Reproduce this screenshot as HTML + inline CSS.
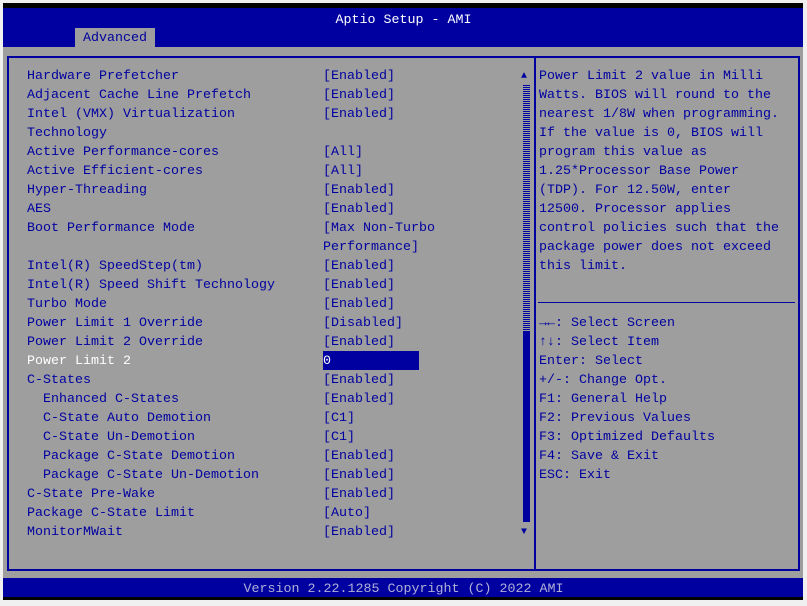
<!DOCTYPE html><html><head><style>
*{margin:0;padding:0}
body{width:807px;height:606px;background:#f0f0f0;position:relative;overflow:hidden;font-family:"Liberation Mono",monospace;font-size:13.33px;color:#0000a0}
.a{position:absolute}
.t{position:absolute;white-space:pre;line-height:19px}
</style></head><body>
<div class="a" style="left:3px;top:3px;width:800px;height:597px;background:#9e9e9e"></div>
<div class="a" style="left:3px;top:3px;width:800px;height:5px;background:#000"></div>
<div class="a" style="left:3px;top:8px;width:800px;height:39px;background:#0000a0"></div>
<div class="t" style="left:0;width:807px;text-align:center;top:11px;color:#fff">Aptio Setup - AMI</div>
<div class="a" style="left:75px;top:28px;width:80px;height:19px;background:#9e9e9e"></div>
<div class="t" style="left:83px;top:29px">Advanced</div>
<div class="a" style="left:7px;top:56px;width:789px;height:511px;border:2px solid #0000a0"></div>
<div class="a" style="left:534px;top:56px;width:2px;height:513px;background:#0000a0"></div>
<div class="a" style="left:538px;top:302px;width:257px;height:1px;background:#0000a0"></div>
<div class="a" style="left:523px;top:84px;width:7px;height:248px;background:repeating-linear-gradient(0deg,#0000a0 0 1px,#9e9e9e 1px 2px)"></div>
<div class="a" style="left:523px;top:332px;width:7px;height:190px;background:#0000a0"></div>
<div class="t" style="left:521px;top:67px;font-size:10px">▲</div>
<div class="t" style="left:521px;top:523px;font-size:10px">▼</div>
<div class="a" style="left:323px;top:351px;width:96px;height:19px;background:#0000a0"></div>
<div class="t" style="left:27px;top:67px">Hardware Prefetcher
Adjacent Cache Line Prefetch
Intel (VMX) Virtualization
Technology
Active Performance-cores
Active Efficient-cores
Hyper-Threading
AES
Boot Performance Mode

Intel(R) SpeedStep(tm)
Intel(R) Speed Shift Technology
Turbo Mode
Power Limit 1 Override
Power Limit 2 Override
<span style="color:#fff">Power Limit 2</span>
C-States
  Enhanced C-States
  C-State Auto Demotion
  C-State Un-Demotion
  Package C-State Demotion
  Package C-State Un-Demotion
C-State Pre-Wake
Package C-State Limit
MonitorMWait</div>
<div class="t" style="left:323px;top:67px">[Enabled]
[Enabled]
[Enabled]

[All]
[All]
[Enabled]
[Enabled]
[Max Non-Turbo
Performance]
[Enabled]
[Enabled]
[Enabled]
[Disabled]
[Enabled]
<span style="color:#fff">0</span>
[Enabled]
[Enabled]
[C1]
[C1]
[Enabled]
[Enabled]
[Enabled]
[Auto]
[Enabled]</div>
<div class="t" style="left:539px;top:67px">Power Limit 2 value in Milli
Watts. BIOS will round to the
nearest 1/8W when programming.
If the value is 0, BIOS will
program this value as
1.25*Processor Base Power
(TDP). For 12.50W, enter
12500. Processor applies
control policies such that the
package power does not exceed
this limit.</div>
<div class="t" style="left:539px;top:314px"><b>→←</b>: Select Screen
<b>↑↓</b>: Select Item
Enter: Select
+/-: Change Opt.
F1: General Help
F2: Previous Values
F3: Optimized Defaults
F4: Save &amp; Exit
ESC: Exit</div>
<div class="a" style="left:3px;top:578px;width:800px;height:19px;background:#0000a0"></div>
<div class="a" style="left:3px;top:597px;width:800px;height:3px;background:#000"></div>
<div class="t" style="left:0;width:807px;text-align:center;top:580px;color:#b0b0d8">Version 2.22.1285 Copyright (C) 2022 AMI</div>
</body></html>
